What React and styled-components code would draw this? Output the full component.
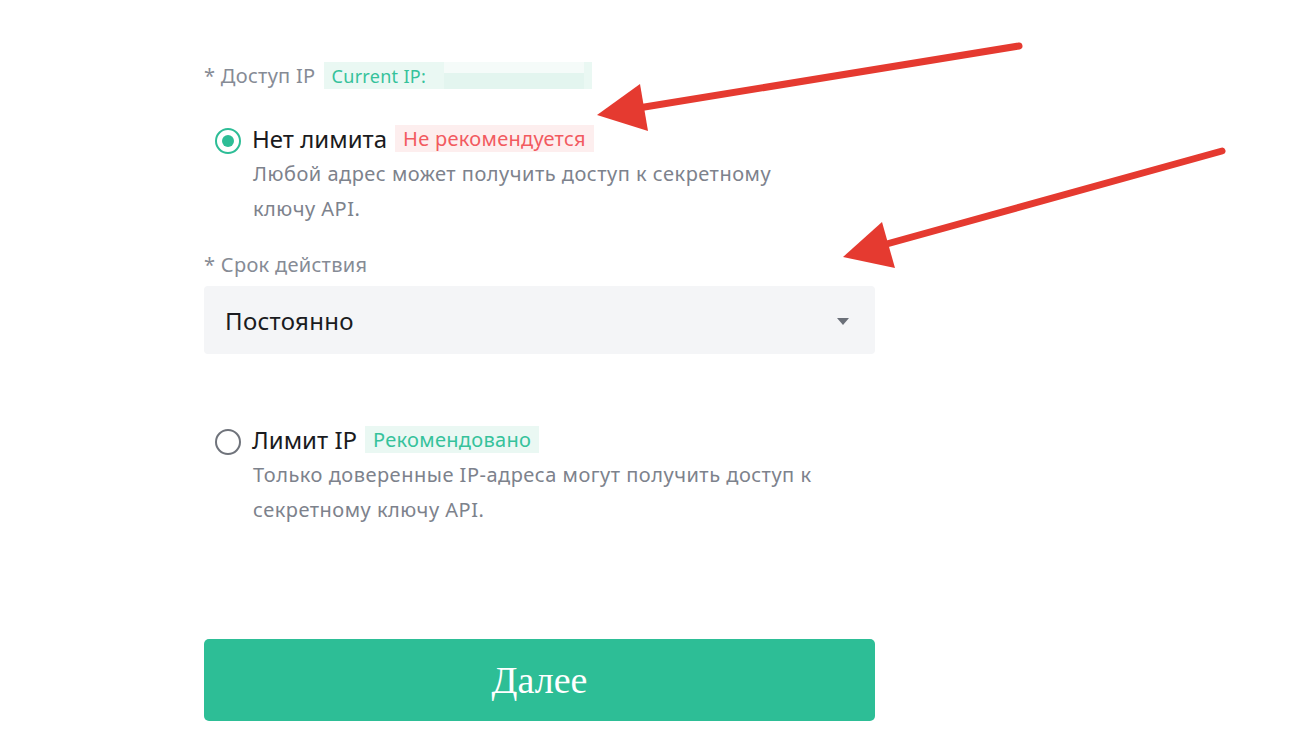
import styled, { createGlobalStyle } from "styled-components";

const GlobalStyle = createGlobalStyle`
  body {
    margin: 0;
    background: #ffffff;
    font-family: "Noto Sans", "Open Sans", sans-serif;
  }
`;

const Page = styled.div`
  position: relative;
  width: 1299px;
  height: 752px;
  overflow: hidden;
  background: #ffffff;
`;

const Form = styled.div`
  width: 671px;
  padding: 62px 0 0 204px;
  display: flex;
  flex-direction: column;
`;

const LabelRow = styled.div`
  display: flex;
  align-items: center;
  height: 27px;
  margin-top: ${(p) => p.$top || 0}px;
  font-size: 20px;
  letter-spacing: 0.3px;
  color: #868b95;
  gap: 8px;
`;

const Badge = styled.span`
  display: inline-flex;
  align-items: center;
  height: 27px;
  padding: 0 8px;
  font-size: ${(p) => p.$size || 20}px;
  letter-spacing: 0.3px;
  color: ${(p) => (p.$tone === "red" ? "#f25a5f" : "#35c29b")};
  background: ${(p) => (p.$tone === "red" ? "#fdeeee" : "#eaf8f3")};
  width: ${(p) => (p.$w ? p.$w + "px" : "auto")};
  box-sizing: border-box;
`;

const Blur = styled.span`
  flex: 1;
  height: 100%;
  margin-left: 18px;
  background: linear-gradient(180deg, #f5fbf9 0%, #f5fbf9 40%, #e3f5ef 40%, #e3f5ef 100%);
`;

const Option = styled.div`
  display: flex;
  flex-direction: column;
  margin-top: ${(p) => p.$top}px;
  padding-left: 11px;
`;

const OptionHead = styled.div`
  display: flex;
  align-items: center;
  height: 27px;
  gap: 8px;
`;

const Radio = styled.span`
  width: 26px;
  height: 26px;
  box-sizing: border-box;
  border-radius: 50%;
  border: 2px solid ${(p) => (p.$checked ? "#2dbd96" : "#6f737b")};
  display: inline-flex;
  align-items: center;
  justify-content: center;
  margin-right: 3px;
  margin-top: 4px;
  &::after {
    content: "";
    width: 12px;
    height: 12px;
    border-radius: 50%;
    background: ${(p) => (p.$checked ? "#2dbd96" : "transparent")};
  }
`;

const OptionTitle = styled.span`
  font-size: 24px;
  color: #1a1b20;
`;

const Description = styled.div`
  margin-top: 4px;
  padding-left: 38px;
  font-size: 20px;
  letter-spacing: 0.5px;
  line-height: 35px;
  color: #7d828c;
  max-width: 575px;
`;

const Select = styled.div`
  margin-top: 8px;
  height: 68px;
  border-radius: 4px;
  background: #f4f5f7;
  display: flex;
  align-items: center;
  justify-content: space-between;
  padding: 0 26px 0 21px;
  font-size: 24px;
  letter-spacing: 0.3px;
  color: #1a1b20;
`;

const Caret = styled.span`
  width: 0;
  height: 0;
  border-left: 6px solid transparent;
  border-right: 6px solid transparent;
  border-top: 7px solid #6b7079;
  margin-top: 3px;
`;

const Button = styled.button`
  margin-top: 112px;
  height: 82px;
  border: none;
  border-radius: 5px;
  background: #2dbe96;
  color: #ffffff;
  font-family: "Liberation Serif", serif;
  font-size: 38px;
  cursor: pointer;
`;

const Overlay = styled.svg`
  position: absolute;
  left: 0;
  top: 0;
  pointer-events: none;
`;

const Arrow = ({ x1, y1, x2, y2, head }) => (
  <g>
    <line x1={x1} y1={y1} x2={x2} y2={y2} stroke="#e53a30" strokeWidth="7" strokeLinecap="round" />
    <polygon points={head} fill="#e53a30" />
  </g>
);

const App = () => {
  return (
    <Page>
      <GlobalStyle />
      <Form>
        <LabelRow>
          <span>* Доступ IP</span>
          <Badge $w={268} $size={18}>
            Current IP:
            <Blur />
          </Badge>
        </LabelRow>

        <Option $top={36}>
          <OptionHead>
            <Radio $checked />
            <OptionTitle>Нет лимита</OptionTitle>
            <Badge $tone="red">Не рекомендуется</Badge>
          </OptionHead>
          <Description>
            Любой адрес может получить доступ к секретному ключу API.
          </Description>
        </Option>

        <LabelRow $top={25}>
          <span>* Срок действия</span>
        </LabelRow>
        <Select>
          <span>Постоянно</span>
          <Caret />
        </Select>

        <Option $top={72}>
          <OptionHead>
            <Radio />
            <OptionTitle>Лимит IP</OptionTitle>
            <Badge>Рекомендовано</Badge>
          </OptionHead>
          <Description>
            Только доверенные IP-адреса могут получить доступ к секретному ключу API.
          </Description>
        </Option>

        <Button>Далее</Button>
      </Form>

      <Overlay width="1299" height="752">
        <Arrow x1={1019} y1={46} x2={620} y2={111} head="597,115 640,84 648,131" />
        <Arrow x1={1222} y1={151} x2={865} y2={250} head="843,257 882,222 895,268" />
      </Overlay>
    </Page>
  );
};

export default App;
